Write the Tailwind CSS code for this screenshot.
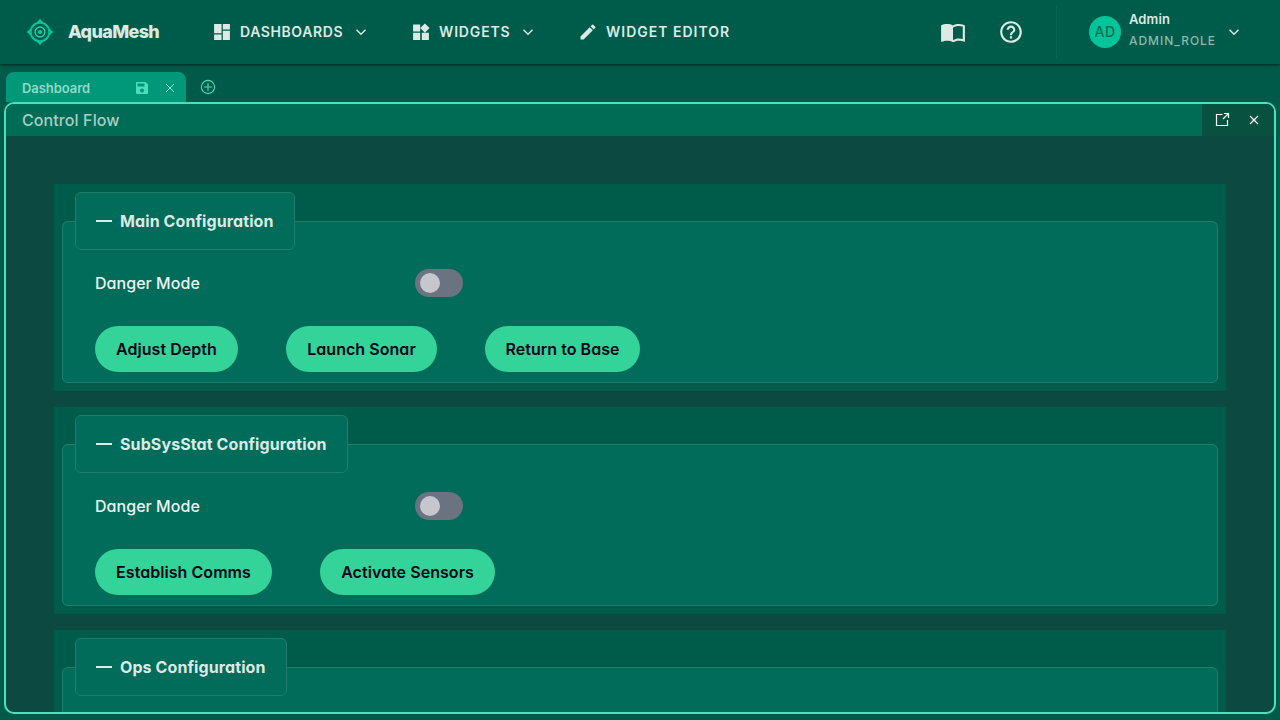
<!DOCTYPE html>
<html lang="en">
<head>
<meta charset="utf-8">
<title>AquaMesh</title>
<script src="https://cdn.jsdelivr.net/npm/@tailwindcss/browser@4"></script>
</head>
<body class="h-[720px] overflow-hidden bg-[#005a49] font-[Inter,sans-serif] text-[#dce9e5]">
<div class="flex h-full flex-col">
  <header class="relative flex h-16 shrink-0 items-center bg-[#005c4a] shadow-[0_1px_3px_rgba(0,0,0,0.6)]">
    <svg class="ml-[26px] size-7" viewBox="0 0 28 28" fill="none">
      <path fill="#00c49a" fill-rule="evenodd" d="M14 .8 17 4c3.200.900 6.100 3.800 7 7l3.200 3-3.200 3c-.900 3.200-3.800 6.100-7 7l-3 3.200L11 24c-3.200-.900-6.100-3.800-7-7L.8 14 4 11c.900-3.200 3.800-6.100 7-7ZM14 5.700a8.300 8.300 0 1 0 0 16.600a8.300 8.300 0 1 0 0-16.600Z"/>
      <circle cx="14" cy="14" r="5" stroke="#2bd4ad" stroke-width="1.300"/>
      <circle cx="14" cy="14" r="2.200" fill="#00c49a"/>
    </svg>
    <span class="ml-[14px] w-[92px] whitespace-nowrap text-lg font-extrabold tracking-[-0.650px]">AquaMesh</span>
    <nav class="flex items-center text-sm font-semibold whitespace-nowrap">
      <div class="ml-[52px] flex w-[200px] items-center">
        <svg class="size-5" viewBox="0 0 24 24" fill="currentColor"><path d="M2.500 2.500h9v11h-9zM13 2.500h8.500v6.500H13zM2.500 15h9v6.500h-9zM13 10.500h8.500v11H13z"/></svg>
        <span class="ml-2 w-[104px] tracking-[0.600px]">DASHBOARDS</span>
        <svg class="ml-[11px] size-3" viewBox="0 0 12 12" fill="none" stroke="currentColor" stroke-width="1.500"><path d="m1.500 3.700 4.500 4.500 4.500-4.500"/></svg>
      </div>
      <div class="-ml-px flex w-[167px] items-center">
        <svg class="size-5" viewBox="0 0 24 24" fill="currentColor"><path d="M2.500 3h8.500v8.500H2.500zM2.500 13h8.500v8.500H2.500zM13 13h8.500v8.500H13zM16.700 1.700l5.600 5.600-5.600 5.600-5.600-5.600z"/></svg>
        <span class="ml-2 w-[72px] tracking-[0.850px]">WIDGETS</span>
        <svg class="ml-[11px] size-3" viewBox="0 0 12 12" fill="none" stroke="currentColor" stroke-width="1.500"><path d="m1.500 3.700 4.500 4.500 4.500-4.500"/></svg>
      </div>
      <div class="flex items-center">
        <svg class="size-5" viewBox="0 0 24 24" fill="currentColor"><path d="M3 17.250V21h3.750L17.810 9.940l-3.750-3.750L3 17.250zM20.710 7.040a1 1 0 0 0 0-1.410l-2.340-2.340a1 1 0 0 0-1.410 0l-1.830 1.830 3.750 3.750 1.830-1.830z"/></svg>
        <span class="ml-2 tracking-[1px]">WIDGET EDITOR</span>
      </div>
    </nav>
    <div class="ml-auto flex items-center">
      <svg class="size-[26px]" viewBox="0 0 24 24" fill="currentColor"><path d="M21 5c-1.110-.350-2.330-.500-3.500-.500-1.950 0-4.050.400-5.500 1.500-1.450-1.100-3.550-1.500-5.500-1.500S2.450 4.900 1 6v14.650c0 .250.250.500.500.500.100 0 .150-.050.250-.050C3.100 20.450 5.050 20 6.500 20c1.950 0 4.050.400 5.500 1.500 1.350-.850 3.800-1.500 5.500-1.500 1.650 0 3.350.300 4.750 1.050.100.050.150.050.250.050.250 0 .500-.250.500-.500V6c-.600-.450-1.250-.750-2-1zm0 13.500c-1.100-.350-2.300-.500-3.500-.500-1.700 0-4.150.650-5.500 1.500V8c1.350-.850 3.800-1.500 5.500-1.500 1.200 0 2.400.150 3.500.500v11.500z"/></svg>
      <svg class="ml-8 size-[26px]" viewBox="0 0 24 24" fill="currentColor"><path d="M11 18h2v-2h-2v2zm1-16C6.480 2 2 6.480 2 12s4.480 10 10 10 10-4.480 10-10S17.520 2 12 2zm0 18c-4.410 0-8-3.590-8-8s3.590-8 8-8 8 3.590 8 8-3.590 8-8 8zm0-14c-2.210 0-4 1.790-4 4h2c0-1.100.900-2 2-2s2 .900 2 2c0 2-3 1.750-3 5h2c0-2.250 3-2.500 3-5 0-2.210-1.790-4-4-4z"/></svg>
      <div class="ml-8 h-[52px] w-px bg-[#0c6452]"></div>
      <div class="ml-8 flex size-8 items-center justify-center rounded-full bg-[#00c49a] text-sm font-medium tracking-[0.500px] text-[#006b55]">AD</div>
      <div class="ml-2 flex w-[88px] flex-col pb-1 whitespace-nowrap">
        <span class="h-[21px] text-[13px] leading-[17px] font-semibold tracking-[0.100px]">Admin</span>
        <span class="text-xs leading-[18px] font-medium tracking-[0.950px] text-[#8ab9ae]">ADMIN_ROLE</span>
      </div>
      <svg class="mr-10 ml-[11px] size-3" viewBox="0 0 12 12" fill="none" stroke="currentColor" stroke-width="1.500"><path d="m1.500 3.700 4.500 4.500 4.500-4.500"/></svg>
    </div>
  </header>

  <div class="flex h-[38px] shrink-0 items-end">
    <div class="ml-1.5 flex h-[30px] w-[180px] items-center rounded-t-lg bg-[#009879] pl-4 text-[#48dfbc]">
      <span class="mt-[3px] w-[113px] text-[13px] font-semibold tracking-[-0.050px] text-[#91d8c6]">Dashboard</span>
      <svg class="mt-0.5 size-[14px]" viewBox="0 0 14 14" fill="currentColor" fill-rule="evenodd"><path d="M2 1h8.500L13 3.500V12a1 1 0 0 1-1 1H2a1 1 0 0 1-1-1V2a1 1 0 0 1 1-1ZM2.500 2.500v3h7v-3ZM7 7.500a2 2 0 1 0 0 4a2 2 0 1 0 0-4Z"/></svg>
      <svg class="mt-0.5 ml-4 size-2.5" viewBox="0 0 10 10" stroke="#8be8d0"><path d="m1 1 8 8M9 1 1 9"/></svg>
    </div>
    <svg class="mb-[7px] ml-[14px] size-4" viewBox="0 0 16 16" fill="none" stroke="#48dfbc" stroke-width="1.100"><circle cx="8" cy="8" r="6.600"/><path d="M8 4v8M4 8h8"/></svg>
  </div>

  <main class="mx-1 h-[612px] shrink-0 overflow-hidden rounded-[10px] border-2 border-[#48e0bd] bg-[#0b4941] [font-feature-settings:'cv02','cv03','cv04','cv11']">
    <div class="flex h-8 items-center bg-[#006c55] pl-4">
      <h1 class="text-base font-[450] tracking-[0.100px] text-[#a6d0c4] [font-feature-settings:normal]">Control Flow</h1>
      <div class="ml-auto flex h-8 w-[72px] items-center bg-[#09513f] text-white">
        <svg class="ml-3 size-4" viewBox="0 0 16 16" fill="none" stroke="currentColor" stroke-width="1.200"><path d="M8.500 2.500h-6v11h11V8M10 1.500h4.500V6M14.200 1.800 9 7"/></svg>
        <svg class="ml-[19px] size-2.5" viewBox="0 0 10 10" stroke="currentColor" stroke-width="1.200"><path d="m1 1 8 8M9 1 1 9"/></svg>
      </div>
    </div>
    <div class="flex flex-col gap-4 p-12">
      <section class="h-[207px] shrink-0 bg-[#005c4a] p-2">
        <fieldset class="h-[191px] rounded-md border border-[#1e7d6b] bg-[#006c59]">
          <legend class="ml-3 flex h-[58px] w-[220px] items-center gap-2 rounded-md border border-[#1e7d6b] bg-[#006c59] pl-5 font-bold whitespace-nowrap"><span class="h-0.5 w-4 bg-current"></span><span class="tracking-[0.100px]">Main Configuration</span></legend>
          <div class="flex items-center px-8 pt-[19px]"><span class="w-80 font-[450] tracking-[0.040px] text-[#edf6f3]">Danger Mode</span><span class="flex h-7 w-12 items-center rounded-full bg-[#6b7280] pl-[5px]"><span class="size-5 rounded-full bg-[#c6c7cd]"></span></span></div>
          <div class="mt-[29px] flex gap-12 px-8 font-semibold tracking-[0.050px] whitespace-nowrap text-[#020617]">
            <button class="h-[46px] w-[143px] rounded-full bg-[#34d399]">Adjust Depth</button>
            <button class="h-[46px] w-[151px] rounded-full bg-[#34d399]">Launch Sonar</button>
            <button class="h-[46px] w-[155px] rounded-full bg-[#34d399]">Return to Base</button>
          </div>
        </fieldset>
      </section>
      <section class="h-[207px] shrink-0 bg-[#005c4a] p-2">
        <fieldset class="h-[191px] rounded-md border border-[#1e7d6b] bg-[#006c59]">
          <legend class="ml-3 flex h-[58px] w-[273px] items-center gap-2 rounded-md border border-[#1e7d6b] bg-[#006c59] pl-5 font-bold whitespace-nowrap"><span class="h-0.5 w-4 bg-current"></span><span class="tracking-[0.100px]">SubSysStat Configuration</span></legend>
          <div class="flex items-center px-8 pt-[19px]"><span class="w-80 font-[450] tracking-[0.040px] text-[#edf6f3]">Danger Mode</span><span class="flex h-7 w-12 items-center rounded-full bg-[#6b7280] pl-[5px]"><span class="size-5 rounded-full bg-[#c6c7cd]"></span></span></div>
          <div class="mt-[29px] flex gap-12 px-8 font-semibold tracking-[0.050px] whitespace-nowrap text-[#020617]">
            <button class="h-[46px] w-[177px] rounded-full bg-[#34d399]">Establish Comms</button>
            <button class="h-[46px] w-[175px] rounded-full bg-[#34d399]">Activate Sensors</button>
          </div>
        </fieldset>
      </section>
      <section class="h-[207px] shrink-0 bg-[#005c4a] p-2">
        <fieldset class="h-[191px] rounded-md border border-[#1e7d6b] bg-[#006c59]">
          <legend class="ml-3 flex h-[58px] w-[212px] items-center gap-2 rounded-md border border-[#1e7d6b] bg-[#006c59] pl-5 font-bold whitespace-nowrap"><span class="h-0.5 w-4 bg-current"></span><span class="tracking-[0.100px]">Ops Configuration</span></legend>
        </fieldset>
      </section>
    </div>
  </main>
</div>
</body>
</html>
